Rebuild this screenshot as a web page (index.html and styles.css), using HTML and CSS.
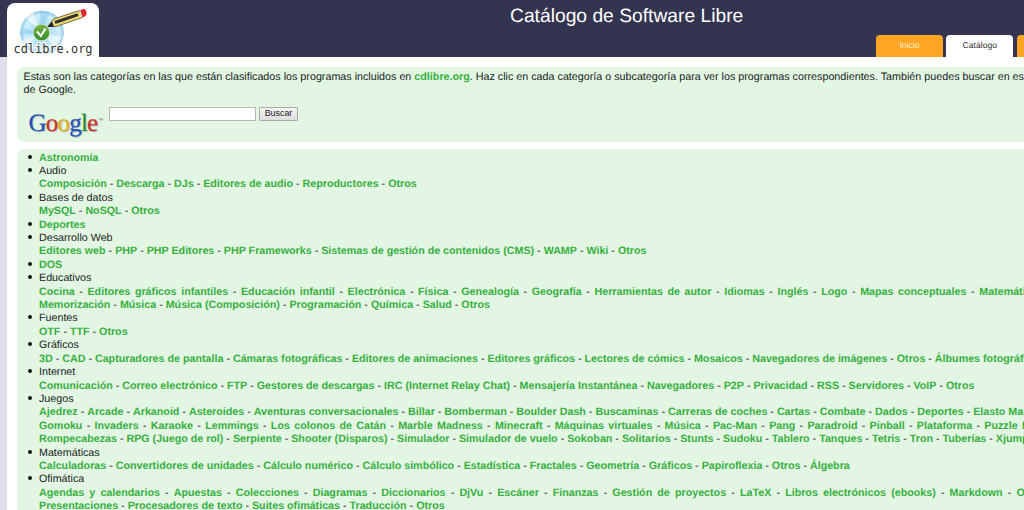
FILE: index.html
```
<!DOCTYPE html>
<html lang="es">
<head>
<meta charset="utf-8">
<title>Catálogo de Software Libre</title>
<link rel="stylesheet" href="styles.css">
</head>
<body>
<header class="header">
  <div class="logo">
    <svg width="92" height="54" viewBox="0 0 92 54">
      <defs>
        <radialGradient id="disc"><stop offset="0" stop-color="#fff"/><stop offset=".45" stop-color="#b5e0f6"/><stop offset=".8" stop-color="#cfeefb"/><stop offset="1" stop-color="#92c9e6"/></radialGradient>
        <linearGradient id="ball" x2="0" y2="1"><stop offset="0" stop-color="#79b84a"/><stop offset="1" stop-color="#2f8a28"/></linearGradient>
      </defs>
      <circle cx="35" cy="29.500" r="21.800" fill="url(#disc)"/>
      <path d="M34 29 18 14 26 9zM34 29 55 34 49 45zM34 29 14 38 19 44z" fill="#fff" opacity=".55"/>
      <path d="M34 29 33 8 43 9zM34 29 14 25 13 32z" fill="#82c7ee" opacity=".5"/>
      <circle cx="34.500" cy="29.500" r="8.300" fill="url(#ball)" stroke="#d8edcf" stroke-width=".7"/>
      <path d="m30 28.500 3.800 4.500 4.700-7.500" fill="none" stroke="#fff" stroke-width="2.200"/>
      <path d="m41 23.500 5.500-7.500 26-8.500 3 7L49 23.500z" fill="#edda72" stroke="#574b25" stroke-width=".8"/>
      <path d="m48 19.500 23-7.800" stroke="#303030" stroke-width="3"/>
      <path d="m40.500 24 4.500-5.500 2 5z" fill="#222"/>
      <path d="m73 7.200 3.500-1.100c3-.4 4.500 6 1.200 7.500l-2.500.9z" fill="#df2830"/>
      <path d="m72.800 7.400 2.200 7" stroke="#eee" stroke-width="1"/>
      <text class="logo-text" x="6.500" y="49.500" textLength="79" lengthAdjust="spacingAndGlyphs">cdlibre.org</text>
    </svg>
  </div>
  <h1 class="title">Catálogo de Software Libre</h1>
  <nav class="tabs"><a class="tab">Inicio</a><a class="tab active">Catálogo</a><a class="tab"></a></nav>
</header>
<main class="page">
  <section class="panel intro">
    <p>Estas son las categorías en las que están clasificados los programas incluidos en <b>cdlibre.org</b>. Haz clic en cada categoría o subcategoría para ver los programas correspondientes. También puedes buscar en esta</p>
    <p>de Google.</p>
    <form class="search">
      <div class="google"><span class="b">G</span><span class="r">o</span><span class="y">o</span><span class="b">g</span><span class="g">l</span><span class="r">e</span><small>™</small></div>
      <input class="field" type="text"><button class="button" type="button">Buscar</button>
    </form>
  </section>
  <section class="panel catalog">
    <ul class="list">
      <li><b>Astronomía</b></li>
      <li>Audio
        <p><b>Composición</b> - <b>Descarga</b> - <b>DJs</b> - <b>Editores de audio</b> - <b>Reproductores</b> - <b>Otros</b></p></li>
      <li>Bases de datos
        <p><b>MySQL</b> - <b>NoSQL</b> - <b>Otros</b></p></li>
      <li><b>Deportes</b></li>
      <li>Desarrollo Web
        <p><b>Editores web</b> - <b>PHP</b> - <b>PHP Editores</b> - <b>PHP Frameworks</b> - <b>Sistemas de gestión de contenidos (CMS)</b> - <b>WAMP</b> - <b>Wiki</b> - <b>Otros</b></p></li>
      <li><b>DOS</b></li>
      <li>Educativos
        <p class="edu"><b>Cocina</b> - <b>Editores gráficos infantiles</b> - <b>Educación infantil</b> - <b>Electrónica</b> - <b>Física</b> - <b>Genealogía</b> - <b>Geografía</b> - <b>Herramientas de autor</b> - <b>Idiomas</b> - <b>Inglés</b> - <b>Logo</b> - <b>Mapas conceptuales</b> - <b>Matemáticas</b></p>
        <p><b>Memorización</b> - <b>Música</b> - <b>Música (Composición)</b> - <b>Programación</b> - <b>Química</b> - <b>Salud</b> - <b>Otros</b></p></li>
      <li>Fuentes
        <p><b>OTF</b> - <b>TTF</b> - <b>Otros</b></p></li>
      <li>Gráficos
        <p><b>3D</b> - <b>CAD</b> - <b>Capturadores de pantalla</b> - <b>Cámaras fotográficas</b> - <b>Editores de animaciones</b> - <b>Editores gráficos</b> - <b>Lectores de cómics</b> - <b>Mosaicos</b> - <b>Navegadores de imágenes</b> - <b>Otros</b> - <b>Álbumes fotográficos</b></p></li>
      <li>Internet
        <p><b>Comunicación</b> - <b>Correo electrónico</b> - <b>FTP</b> - <b>Gestores de descargas</b> - <b>IRC (Internet Relay Chat)</b> - <b>Mensajería Instantánea</b> - <b>Navegadores</b> - <b>P2P</b> - <b>Privacidad</b> - <b>RSS</b> - <b>Servidores</b> - <b>VoIP</b> - <b>Otros</b></p></li>
      <li>Juegos
        <p><b>Ajedrez</b> - <b>Arcade</b> - <b>Arkanoid</b> - <b>Asteroides</b> - <b>Aventuras conversacionales</b> - <b>Billar</b> - <b>Bomberman</b> - <b>Boulder Dash</b> - <b>Buscaminas</b> - <b>Carreras de coches</b> - <b>Cartas</b> - <b>Combate</b> - <b>Dados</b> - <b>Deportes</b> - <b>Elasto Mania</b></p>
        <p class="games"><b>Gomoku</b> - <b>Invaders</b> - <b>Karaoke</b> - <b>Lemmings</b> - <b>Los colonos de Catán</b> - <b>Marble Madness</b> - <b>Minecraft</b> - <b>Máquinas virtuales</b> - <b>Música</b> - <b>Pac-Man</b> - <b>Pang</b> - <b>Paradroid</b> - <b>Pinball</b> - <b>Plataforma</b> - <b>Puzzle Bobble</b></p>
        <p><b>Rompecabezas</b> - <b>RPG (Juego de rol)</b> - <b>Serpiente</b> - <b>Shooter (Disparos)</b> - <b>Simulador</b> - <b>Simulador de vuelo</b> - <b>Sokoban</b> - <b>Solitarios</b> - <b>Stunts</b> - <b>Sudoku</b> - <b>Tablero</b> - <b>Tanques</b> - <b>Tetris</b> - <b>Tron</b> - <b>Tuberías</b> - <b>Xjump</b></p></li>
      <li>Matemáticas
        <p><b>Calculadoras</b> - <b>Convertidores de unidades</b> - <b>Cálculo numérico</b> - <b>Cálculo simbólico</b> - <b>Estadística</b> - <b>Fractales</b> - <b>Geometría</b> - <b>Gráficos</b> - <b>Papiroflexia</b> - <b>Otros</b> - <b>Álgebra</b></p></li>
      <li>Ofimática
        <p class="office"><b>Agendas y calendarios</b> - <b>Apuestas</b> - <b>Colecciones</b> - <b>Diagramas</b> - <b>Diccionarios</b> - <b>DjVu</b> - <b>Escáner</b> - <b>Finanzas</b> - <b>Gestión de proyectos</b> - <b>LaTeX</b> - <b>Libros electrónicos (ebooks)</b> - <b>Markdown</b> - <b>OCR</b></p>
        <p><b>Presentaciones</b> - <b>Procesadores de texto</b> - <b>Suites ofimáticas</b> - <b>Traducción</b> - <b>Otros</b></p></li>
    </ul>
  </section>
</main>
</body>
</html>
```
FILE: styles.css
```
* { box-sizing: border-box; }
html, body { height: 100%; overflow: hidden; }
body {
  margin: 0;
  background: #dfdeeb;
  color: #17231b;
  font: 10.71px/13.4px "Liberation Sans", Arial, sans-serif;
  text-rendering: geometricPrecision;
}
p { margin: 0; white-space: nowrap; }
b { color: #36b03e; }
.header {
  display: grid;
  grid-template-columns: 92px 1fr 148px;
  height: 57px;
  padding-left: 7px;
  background: #33344f;
}
.logo { height: 54px; margin-top: 3px; background: #fff; border-radius: 8px 8px 0 0; }
.logo svg { display: block; }
.logo-text { font: 13px "DejaVu Sans Mono", monospace; fill: #333; stroke: rgba(255, 255, 255, .75); stroke-width: 2.5px; paint-order: stroke; }
.title { margin: 6px 0 0 411px; color: #fff; font-size: 19.25px; line-height: 22px; font-weight: normal; white-space: nowrap; }
.tabs { display: flex; gap: 3.3px; align-items: flex-end; overflow: hidden; }
.tab { flex: none; width: 67px; height: 22px; border-radius: 4px 4px 0 0; background: #ffa526; color: #fff0c8; text-align: center; font-size: 8.6px; line-height: 21px; }
.tab.active { background: #fff; color: #333; }
.page { height: 453px; margin-left: 7px; padding: 10px 0 0 10px; background: #fff; overflow: hidden; }
.panel { background: #e3f6e4; border-radius: 8px 0 0 8px; }
.intro { height: 75px; padding: 4px 0 0 6.5px; overflow: hidden; font-size: 10.745px; }
.search { display: flex; align-items: flex-start; margin: 9px 0 0 5px; }
.google { width: 80.5px; padding-top: 5px; font: 25px/24px "Liberation Serif", serif; letter-spacing: -.8px; white-space: nowrap; text-shadow: 1px 1px 1px #b4beb8; -webkit-text-stroke: .2px currentColor; }
.google small { margin-left: 1px; font: 5px/5px "Liberation Sans", sans-serif; vertical-align: 9px; color: #555; text-shadow: none; -webkit-text-stroke: 0; }
.b { color: #2451b5; }
.r { color: #c8342b; }
.y { color: #dfae18; }
.g { color: #278c35; }
.field { width: 147px; height: 14px; margin: 0; padding: 0; border: 1px solid #b5b9b5; background: #fff; }
.button { width: 39px; height: 14px; margin-left: 3px; padding: 0; border: 1px solid #aaa; border-radius: 1px; background: linear-gradient(#f5f5f5, #dedede); color: #222; font: 8.9px/11px "Liberation Sans", Arial, sans-serif; }
.catalog { height: 400px; margin-top: 7px; padding-top: 2.6px; border-radius: 8px 0 0; }
.list { margin: 0; padding-left: 22px; list-style: none; }
.list li::before {
  content: "";
  display: inline-block;
  width: 4px;
  height: 4px;
  margin: 0 7px 2px -11px;
  border-radius: 50%;
  background: #111;
  vertical-align: baseline;
}
.edu { word-spacing: 1.64px; }
.games { word-spacing: 1.32px; }
.office { word-spacing: 2.16px; }
```
